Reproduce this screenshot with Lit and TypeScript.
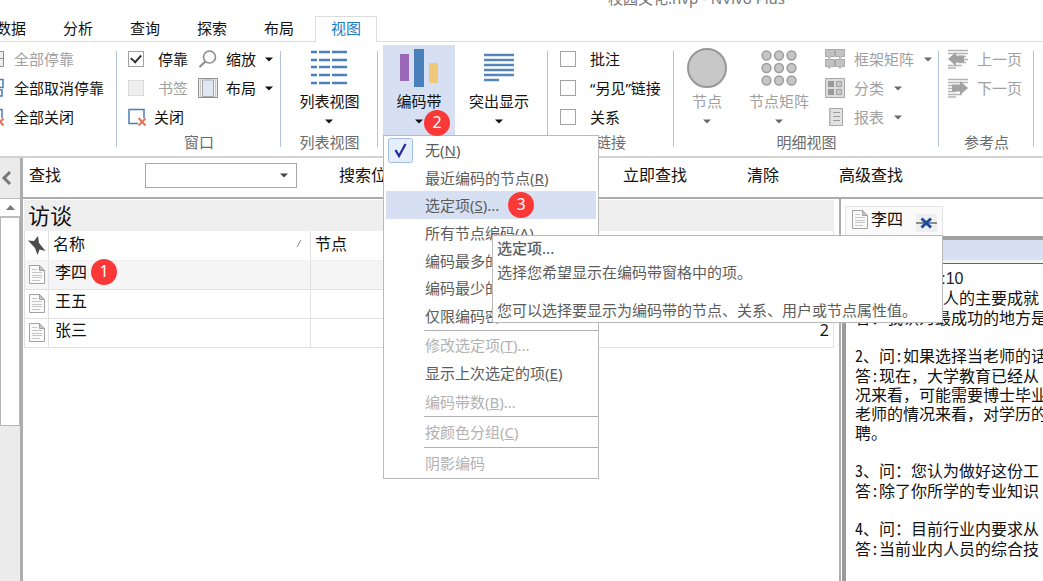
import { LitElement, html, css, svg, nothing } from "lit";
import { customElement } from "lit/decorators.js";
import { classMap } from "lit/directives/class-map.js";

const caret = html`<svg class="caret" width="8" height="5" viewBox="0 0 8 5" aria-hidden="true"><path d="M0 0.5h8L4 4.5z" fill="currentColor"/></svg>`;

const docIcon = html`<svg class="doc" width="18" height="21" viewBox="0 0 18 21" aria-hidden="true">
  <path d="M1.5 1.5h10l5 5v13h-15z" fill="#fafafa" stroke="#a2a2a2"/>
  <path d="M11.5 1.5v5h5z" fill="#c4c4c4" stroke="#a2a2a2"/>
  <path d="M4 5.5h5M4 8.5h10M4 11.5h10M4 13.5h10M4 16.5h8" stroke="#c6c6c6"/>
</svg>`;

const dockIcon = html`<svg width="18" height="18" viewBox="0 0 18 18"><path d="M1 1.5h16.5v15H1M1 8.500h16" fill="#eee" stroke="#8d8d8d"/></svg>`;
const undockIcon = html`<svg width="18" height="20" viewBox="0 0 18 20"><path d="M1 1.500h16v8H1M1 12h15v6H1" fill="#fff" stroke="#4a7db8" stroke-width="1.500"/></svg>`;
const closeIcon = html`<svg width="18" height="18" viewBox="0 0 18 18"><path d="M1 1.500h15v14H1z" fill="#fff" stroke="#4a7db8" stroke-width="1.500"/><path d="M10 10h8v8h-8z" fill="#fff"/><path d="M10.500 10l7 7.500M17.500 10.500l-7 7" stroke="#e2745c" stroke-width="2"/></svg>`;
const zoomIcon = html`<svg width="20" height="20" viewBox="0 0 20 20"><circle cx="11.500" cy="8" r="6" fill="#fbfbfb" stroke="#8e8e8e" stroke-width="1.600"/><path d="M7.500 12.500l-6 5.500" stroke="#8e8e8e" stroke-width="2.200"/></svg>`;
const layoutIcon = html`<svg width="20" height="20" viewBox="0 0 20 20"><path d="M.5.500h19v19H.5z" fill="#f0f0f0" stroke="#8e8e8e"/><path d="M4.500 2v16.500h11V2z" fill="#dfe8f2" stroke="#a8a8a8"/><path d="M2.500 1v18M17.500 1v18" stroke="#ccc"/></svg>`;
const listIcon = html`<svg width="36" height="36" viewBox="0 0 36 36"><g stroke="#4a80bb" stroke-width="2.500">${[2, 10, 17, 25, 33].map(
  (y) => svg`<path d=${`M0 ${y}h6M8 ${y}h11M21 ${y}h15`}/>`
)}</g></svg>`;
const stripesIcon = html`<svg width="38" height="38" viewBox="0 0 38 38"><path d="M0 5h9v27H0z" fill="#9a68b8"/><path d="M14 0h10v38H14z" fill="#4a80b9"/><path d="M29 14h9v20h-9z" fill="#efc878"/></svg>`;
const highlightIcon = html`<svg width="30" height="30" viewBox="0 0 30 30"><path d="M0 2h30M0 7h30M0 12h30M0 17h30M0 22h30M0 27h15" stroke="#5585bb" stroke-width="2.400"/></svg>`;
const nodeIcon = html`<svg width="40" height="40" viewBox="0 0 40 40"><circle cx="20" cy="20" r="19" fill="#c8c8c8" stroke="#989898" stroke-width="2"/></svg>`;
const matrixIcon = html`<svg width="36" height="36" viewBox="0 0 36 36"><g fill="#c6c6c6" stroke="#9c9c9c" stroke-width="1.500">${[5.500, 18, 30.500].map((y) =>
  [5.500, 18, 30.500].map((x) => svg`<circle cx=${x} cy=${y} r="4.400"/>`)
)}</g></svg>`;
const frameworkIcon = html`<svg width="20" height="20" viewBox="0 0 20 20"><path d="M.5.500h9v7H6l-2 2-1-2H.5zM10.500.500h9v7H17l-2 2-1-2h-3.500zM.5 10.500h9v7H6l-2 2-1-2H.5zM10.500 10.500h9v7H17l-2 2-1-2h-3.500z" fill="#c2c2c2" stroke="#a8a8a8"/></svg>`;
const classIcon = html`<svg width="20" height="20" viewBox="0 0 20 20"><path d="M.5.500h19v19H.5z" fill="#dcdcdc" stroke="#a8a8a8"/><path d="M3 3h6v6H3zM3 11h6v6H3z" fill="#9b9b9b"/><path d="M11.500 3.500h5v5h-5zM11.500 11.500h5v5h-5z" fill="#c9c9c9" stroke="#a2a2a2"/></svg>`;
const reportIcon = html`<svg width="20" height="20" viewBox="0 0 20 20"><path d="M4.500 1.500h13v17h-13z" fill="#e2e2e2" stroke="#a8a8a8"/><path d="M8 5.500h7M8 9.500h7M8 13.500h7" stroke="#9b9b9b"/><path d="M5 3v14" stroke="#bbb" stroke-dasharray="2 1" stroke-width="2"/></svg>`;
const prevIcon = html`<svg width="20" height="20" viewBox="0 0 20 20"><path d="M0 1.500h20M0 4.500h20M10 7.500h8M10 10.500h10M10 13.500h8M0 16.500h14M0 19h8" stroke="#b4b4b4" stroke-width="1.500"/><path d="M0 10l8-7v3.500h8v7H8V17z" fill="#a2a2a2"/></svg>`;
const nextIcon = html`<svg width="20" height="20" viewBox="0 0 20 20"><path d="M0 1.500h20M0 4.500h20M0 7.500h8M0 10.500h8M0 13.500h8M0 16.500h14M0 19h8" stroke="#b4b4b4" stroke-width="1.500"/><path d="M20 10l-8-7v3.500H4v7h8V17z" fill="#a2a2a2"/></svg>`;

interface MenuEntry {
  text: string;
  key?: string;
  tail?: string;
  disabled?: boolean;
  checked?: boolean;
  hot?: boolean;
}

const menuSections: MenuEntry[][] = [
  [
    { text: "无", key: "N", checked: true },
    { text: "最近编码的节点", key: "R" },
    { text: "选定项", key: "S", tail: "...", hot: true },
    { text: "所有节点编码", key: "A" },
    { text: "编码最多的" },
    { text: "编码最少的" },
    { text: "仅限编码密" },
  ],
  [
    { text: "修改选定项", key: "T", tail: "...", disabled: true },
    { text: "显示上次选定的项", key: "E" },
    { text: "编码带数", key: "B", tail: "...", disabled: true },
  ],
  [{ text: "按颜色分组", key: "C", disabled: true }],
  [{ text: "阴影编码", disabled: true }],
];

// Document text: ASCII runs are set at half the width of a Chinese character.
const mono = (line: string) =>
  line.split(/([\x21-\x7e]+)/).map((part, i) => (i % 2 ? html`<span class="half">${part}</span>` : part));

const paragraphs: string[][] = [
  ["1、问：您个人的主要成就", "答：我认为最成功的地方是"],
  ["2、问:如果选择当老师的话", "答:现在，大学教育已经从", "况来看，可能需要博士毕业", "老师的情况来看，对学历的", "聘。"],
  ["3、问：您认为做好这份工", "答:除了你所学的专业知识"],
  ["4、问：目前行业内要求从", "答:当前业内人员的综合技"],
];

const base = css`
  * { box-sizing: border-box; }
  button, select, input { font: inherit; color: inherit; margin: 0; padding: 0; border: 0; background: none; }
  button { white-space: nowrap; text-align: left; }
  svg { display: block; flex: none; }
`;

@customElement("stripe-menu")
export class StripeMenu extends LitElement {
  static styles = [
    base,
    css`
      :host { display: block; width: 216px; border: 1px solid #b9b9b9; background: #fff; color: #5c5c5c; }
      .section { display: grid; grid-auto-rows: 1fr; min-height: 31px; }
      .section.s0 { height: 194px; }
      .section.s1 { height: 86px; }
      .section + .section { border-top: 1px solid #b0b0b0; margin-left: 40px; }
      .section + .section .item { padding-left: 1px; }
      .item { display: flex; align-items: center; position: relative; padding-left: 41px; margin: 0 2px 0 0; line-height: 20px; }
      .item.hot { background: linear-gradient(#d6e0f2, #d6e0f2) 2px 0 no-repeat; }
      .item:disabled { color: #b2b2b2; }
      .check { position: absolute; left: 4px; top: 2px; }
      .step { position: absolute; left: 124px; top: 1px; }
      .tip { position: absolute; left: 108px; top: 99px; border: 1px solid #b9b9b9; background: #fff; padding: 0 25px 0 4px; white-space: nowrap; line-height: 24px; }
      .tip p { margin: 0; }
      .tip .title { font-weight: 500; }
      .tip p + p + p { margin-top: 14px; }
    `,
  ];
  render() {
    return html`<div role="menu">
        ${menuSections.map(
          (items, i) => html`<div class="section s${i}" role="group">
            ${items.map(
              (m) => html`<button role="menuitem" class=${classMap({ item: true, hot: !!m.hot })} ?disabled=${m.disabled}>
                ${m.checked
                  ? html`<svg class="check" width="25" height="25" viewBox="0 0 25 25"><rect x=".5" y=".5" width="24" height="24" rx="2" fill="#e6eefa" stroke="#a3bee6"/><path d="M7.500 12l3.500 6L17.500 6" fill="none" stroke="#1f2a9c" stroke-width="2.200"/></svg>`
                  : nothing}
                <span>${m.text}${m.key ? html`(<u>${m.key}</u>)` : nothing}${m.tail ?? nothing}</span>
                ${m.hot ? html`<step-badge class="step">3</step-badge>` : nothing}
              </button>`
            )}
          </div>`
        )}
      </div>
      <div class="tip" role="tooltip">
        <p class="title">选定项...</p>
        <p>选择您希望显示在编码带窗格中的项。</p>
        <p>您可以选择要显示为编码带的节点、关系、用户或节点属性值。</p>
      </div>`;
  }
}

@customElement("step-badge")
export class StepBadge extends LitElement {
  static styles = css`
    :host { display: block; width: 26px; height: 26px; border-radius: 50%; background: #fb3838; color: #fff; font-size: 16px; line-height: 24px; text-align: center; }
  `;
  render() {
    return html`<slot></slot>`;
  }
}

@customElement("app-root")
export class AppRoot extends LitElement {
  static styles = [
    base,
    css`
      :host { display: flex; flex-direction: column; height: 100vh; overflow: hidden; background: #fff; color: #111; font: 15px/20px "Noto Sans", "Noto Sans CJK SC", sans-serif; }

      .title { height: 16px; overflow: hidden; padding-left: 608px; color: #777; white-space: nowrap; }
      .title span { display: block; margin-top: -12px; }

      .tabs { display: flex; gap: 5px; height: 26px; margin-left: -20px; box-shadow: inset 0 -1px #dcdcdc; flex: none; }
      .tab { padding: 0 15px 3px; border: 1px solid transparent; border-bottom: 0; }
      .tab.active { border-color: #dcdcdc; background: #fff; color: #1f7ac0; }

      .ribbon { display: flex; padding-top: 3px; border-bottom: 2px solid #d2d2d2; flex: none; white-space: nowrap; }
      .group { display: flex; flex-direction: column; flex: none; padding-bottom: 5px; }
      .group:not(:last-child) { background: linear-gradient(#b3c3dc, #b3c3dc) right 6px / 1px 96px no-repeat; }
      .main { display: flex; height: 90px; }
      .label { height: 16px; line-height: 14px; text-align: center; color: #6c6c6c; }
      .rows { display: grid; grid-auto-rows: 29px; align-content: start; justify-items: start; margin-top: -1px; }
      .row { display: flex; align-items: center; gap: 10px; }
      .row:disabled, .row.off, .big:disabled { color: #a0a0a0; }
      .row:disabled .caret, .big:disabled .caret { color: #6a6a6a; }
      .row .caret { margin: 2px 0 0 1px; }
      .check { appearance: none; width: 16px; height: 16px; border: 1px solid #a2a2a2; background: #fff; display: grid; place-content: center; flex: none; }
      .check:checked::before { content: ""; width: 8px; height: 5px; border: solid #333; border-width: 0 0 2px 2px; transform: translateY(-1px) rotate(-48deg); }
      .check:disabled { background: #eee; border-color: #dadada; }
      .big { display: grid; grid-template-rows: 46px 20px 20px; place-items: center; align-content: start; }
      .big.open { background: #d6e0f2; width: 72px; height: 90px; }
      .holder { position: relative; }
      .holder stripe-menu { position: absolute; left: 0; top: 100%; z-index: 5; }
      .holder step-badge { position: absolute; left: 41px; top: 65px; z-index: 6; }

      .g-all { width: 117px; }
      .g-all .rows { margin-left: -14px; }
      .g-win { width: 164px; }
      .g-win .main { padding-left: 11px; }
      .g-win .ticks { width: 70px; }
      .g-win .row { gap: 8px; }
      .g-list { width: 97px; }
      .g-list .main { justify-content: center; }
      .g-code { width: 170px; }
      .g-code .main { padding-left: 5px; gap: 14px; }
      .g-link { width: 126px; }
      .g-link .main { padding-left: 12px; }
      .ticks label.row { gap: 14px; }
      .g-node { width: 265px; }
      .g-node .main { padding-left: 11px; }
      .g-node .big { min-width: 44px; margin-right: 20px; }
      .g-node .big + .big { margin-right: 16px; }
      .g-node .row, .g-ref .row { gap: 9px; }
      .g-ref { width: 95px; }
      .g-ref .main { padding-left: 9px; }

      .work { display: flex; flex: 1; min-height: 0; }
      .rail { width: 20px; flex: none; background: #ebebeb; display: flex; flex-direction: column; }
      .collapse { height: 40px; display: grid; place-content: center start; }
      .up { height: 20px; background: #fff; border: 1px solid #bdbdbd; border-width: 1px 0 2px; display: grid; place-content: center; }
      .track { height: 208px; background: #fff; border: 1px solid #b5b5b5; border-top: 0; }
      .split { width: 3px; flex: none; background: #adadad; }
      .content { flex: 1; min-width: 0; display: flex; flex-direction: column; font-size: 16px; }

      .find { display: flex; align-items: center; height: 41px; padding: 0 0 5px 6px; border-bottom: 2px solid #ababab; flex: none; white-space: nowrap; }
      .combo { display: grid; align-items: center; width: 152px; height: 25px; margin: 0 42px 0 84px; }
      .combo select, .combo svg { grid-area: 1 / 1; }
      .combo select { appearance: none; width: 100%; height: 100%; border: 1px solid #a6a6b0; background: #fff; }
      .combo svg { justify-self: end; margin-right: 9px; pointer-events: none; color: #444; }
      .find .go { margin-left: 236px; }
      .find .clear { margin-left: 60px; }
      .find .adv { margin-left: 60px; }

      .panes { display: flex; flex: 1; min-height: 0; }
      .list { flex: 1; min-width: 0; padding: 1px 5px 0 1px; }
      h1 { margin: 0; height: 31px; line-height: 31px; padding-left: 4px; font-size: 22px; font-weight: 400; background: #eee; }
      table { width: 100%; border-collapse: collapse; table-layout: fixed; }
      th, td { height: 29px; padding: 0 0 5px 6px; border: 1px solid #e2e2e2; font-weight: 400; text-align: left; line-height: 22px; }
      th { border-top: 0; border-bottom-color: #f0f0f0; padding: 0 0 3px 4px; }
      .ic { width: 24px; padding: 0 0 0 3px; }
      .nm { width: 262px; }
      tr.sel td { background: #f5f5f5; }
      .cell { display: flex; align-items: center; gap: 4px; height: 22px; }
      .cell .sort { margin-left: auto; margin-right: 8px; }
      .cell step-badge { margin: -2px 0; }
      td.num { text-align: right; padding-right: 4px; }

      .detail { width: 204px; flex: none; display: flex; flex-direction: column; border-left: 2px solid #adadad; padding-top: 7px; }
      .doctab { display: flex; align-items: center; align-self: flex-start; margin-left: 4px; height: 30px; width: 98px; padding: 0 5px 5px; gap: 2px; border: 1px solid #e4e4e4; border-bottom: 0; background: #fafafa; }
      .doctab .pin { margin: 8px 0 0 auto; background: #efefef; }
      .viewer { flex: 1; min-height: 0; margin-left: 1px; border-left: 4px solid #9b9b9b; border-top: 4px solid #a0a0a0; overflow: hidden; }
      .strip { height: 24px; background: #d6e0f2; border-bottom: 1px solid #666; box-shadow: inset 0 -3px #f3f3f3; }
      .text { padding: 5px 0 0 9px; line-height: 19px; white-space: nowrap; font-family: "Noto Sans CJK SC", sans-serif; }
      .text p { margin: 0 0 19px; }
      .text .line { display: block; }
      .text .line:nth-child(2) { margin-top: 1px; }
      .text .half { font-feature-settings: "hwid"; }
      .text .time { margin: 0; font-family: "Liberation Sans", "Noto Sans CJK SC", sans-serif; color: #222; }
    `,
  ];

  private caption(label: string) {
    return html`<div class="label">${label}</div>`;
  }

  private ribbon() {
    return html`<div class="ribbon">
      <div class="group g-all">
        <div class="main"><div class="rows">
          <button class="row" disabled>${dockIcon}全部停靠</button>
          <button class="row">${undockIcon}全部取消停靠</button>
          <button class="row">${closeIcon}全部关闭</button>
        </div></div>
        ${this.caption("")}
      </div>
      <div class="group g-win">
        <div class="main">
          <div class="rows ticks">
            <label class="row"><input class="check" type="checkbox" checked>停靠</label>
            <label class="row off"><input class="check" type="checkbox" disabled>书签</label>
            <button class="row">${closeIcon}关闭</button>
          </div>
          <div class="rows">
            <button class="row">${zoomIcon}缩放${caret}</button>
            <button class="row">${layoutIcon}布局${caret}</button>
          </div>
        </div>
        ${this.caption("窗口")}
      </div>
      <div class="group g-list">
        <div class="main"><button class="big">${listIcon}<span>列表视图</span>${caret}</button></div>
        ${this.caption("列表视图")}
      </div>
      <div class="group g-code">
        <div class="main">
          <div class="holder">
            <button class="big open" aria-haspopup="menu" aria-expanded="true">${stripesIcon}<span>编码带</span>${caret}</button>
            <stripe-menu></stripe-menu>
            <step-badge>2</step-badge>
          </div>
          <button class="big">${highlightIcon}<span>突出显示</span>${caret}</button>
        </div>
        ${this.caption("")}
      </div>
      <div class="group g-link">
        <div class="main"><div class="rows ticks">
          ${["批注", "“另见”链接", "关系"].map((t) => html`<label class="row"><input class="check" type="checkbox">${t}</label>`)}
        </div></div>
        ${this.caption("链接")}
      </div>
      <div class="group g-node">
        <div class="main">
          <button class="big" disabled>${nodeIcon}<span>节点</span>${caret}</button>
          <button class="big" disabled>${matrixIcon}<span>节点矩阵</span>${caret}</button>
          <div class="rows">
            <button class="row" disabled>${frameworkIcon}框架矩阵${caret}</button>
            <button class="row" disabled>${classIcon}分类${caret}</button>
            <button class="row" disabled>${reportIcon}报表${caret}</button>
          </div>
        </div>
        ${this.caption("明细视图")}
      </div>
      <div class="group g-ref">
        <div class="main"><div class="rows">
          <button class="row" disabled>${prevIcon}上一页</button>
          <button class="row" disabled>${nextIcon}下一页</button>
        </div></div>
        ${this.caption("参考点")}
      </div>
      <div class="group"></div>
    </div>`;
  }

  render() {
    return html`
      <div class="title"><span>校园文化.nvp - NVivo Plus</span></div>
      <nav class="tabs">
        ${["数据", "分析", "查询", "探索", "布局", "视图"].map(
          (t) => html`<button class=${classMap({ tab: true, active: t === "视图" })}>${t}</button>`
        )}
      </nav>
      ${this.ribbon()}
      <div class="work">
        <div class="rail">
          <button class="collapse" aria-label="收起"><svg width="14" height="16" viewBox="0 0 14 16"><path d="M10 2L4 8l6 6" fill="none" stroke="#777" stroke-width="3"/></svg></button>
          <button class="up" aria-label="向上滚动"><svg width="9" height="5" viewBox="0 0 9 5"><path d="M0 5h9L4.500 0z" fill="#777"/></svg></button>
          <div class="track"></div>
        </div>
        <div class="split"></div>
        <div class="content">
          <div class="find">
            <label for="q">查找</label>
            <div class="combo"><select id="q"></select>${caret}</div>
            <span>搜索位</span>
            <button class="go">立即查找</button>
            <button class="clear">清除</button>
            <button class="adv">高级查找</button>
          </div>
          <div class="panes">
            <section class="list">
              <h1>访谈</h1>
              <table>
                <thead>
                  <tr>
                    <th class="ic"><svg width="19" height="19" viewBox="0 0 19 19"><path d="M0 4.500l6 .5L10 0l1 7 6.500 8-6-1.500L9.500 19 7 12z" fill="#4c4c4c"/></svg></th>
                    <th class="nm"><div class="cell">名称<svg class="sort" width="6" height="9" viewBox="0 0 6 9"><path d="M1 8l4-7" stroke="#888"/></svg></div></th>
                    <th>节点</th>
                  </tr>
                </thead>
                <tbody>
                  <tr class="sel"><td class="ic">${docIcon}</td><td><div class="cell">李四<step-badge>1</step-badge></div></td><td></td></tr>
                  <tr><td class="ic">${docIcon}</td><td>王五</td><td></td></tr>
                  <tr><td class="ic">${docIcon}</td><td>张三</td><td class="num">2</td></tr>
                </tbody>
              </table>
            </section>
            <section class="detail">
              <div class="doctab">${docIcon}<span>李四</span>
                <button class="pin" aria-label="关闭"><svg width="21" height="18" viewBox="0 0 21 18"><path d="M0 9h21" stroke="#8a8a8a" stroke-width="2"/><path d="M5.500 4.500L15 13.500M15 4.500l-9.500 9" stroke="#1d4a9a" stroke-width="3"/></svg></button>
              </div>
              <div class="viewer">
                <div class="strip"></div>
                <article class="text">
                  <p class="time">访谈时间 10:10</p>
                  ${paragraphs.map((lines) => html`<p>${lines.map((l) => html`<span class="line">${mono(l)}</span>`)}</p>`)}
                </article>
              </div>
            </section>
          </div>
        </div>
      </div>`;
  }
}
